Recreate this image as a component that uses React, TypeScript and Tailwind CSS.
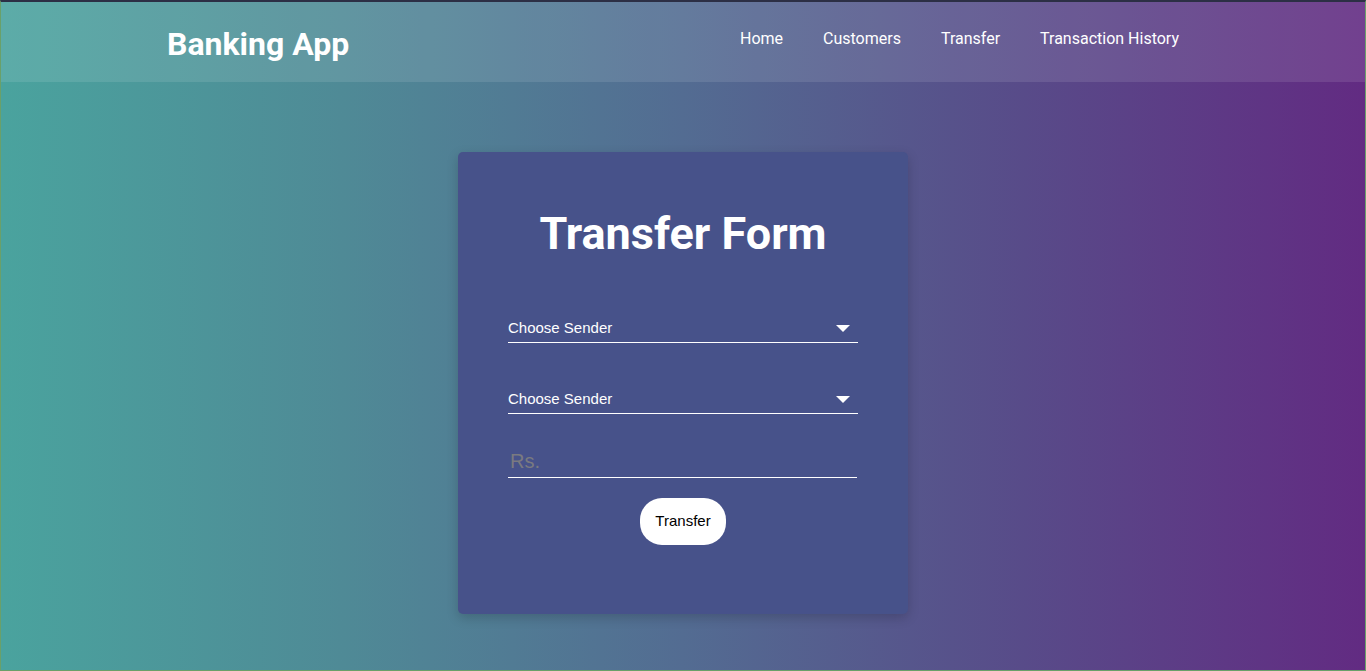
export default function App() {
  const links = ["Home", "Customers", "Transfer", "Transaction History"];

  return (
    <div className="h-[671px] w-full overflow-hidden border-t-2 border-t-[#2c2f45] border-x border-b border-x-[#6aa06a] border-b-[#6aa06a] bg-[linear-gradient(to_right,#4aa39e_0%,#4f8a96_25%,#536c92_50%,#584b89_75%,#622b82_100%)] font-['Roboto',sans-serif]">
      {/* Navbar */}
      <nav className="h-[80px] bg-white/10 flex items-center">
        <div className="pl-[166px] pt-[4px]">
          <span className="text-[32px] font-bold text-white">Banking App</span>
        </div>
        <ul className="ml-auto mr-[186px] flex gap-10 text-white text-[16px] pb-[6px]">
          {links.map((l) => (
            <li key={l}>
              <a href="#">{l}</a>
            </li>
          ))}
        </ul>
      </nav>

      {/* Form card */}
      <div className="flex justify-center pt-[70px]">
        <div className="w-[450px] h-[462px] rounded-[5px] bg-[#47528a] shadow-[0_4px_12px_rgba(0,0,0,0.18)] flex flex-col items-center">
          <h1 className="mt-[56px] text-[45px] font-bold text-white leading-[52px]">Transfer Form</h1>

          <div className="mt-[55px] w-[350px] flex flex-col font-['Liberation_Sans',Arial,sans-serif]">
            <div className="h-[28px] border-b border-white flex items-center justify-between text-white text-[15px]">
              <span>Choose Sender</span>
              <svg width="14" height="8" viewBox="0 0 14 8" className="mr-[8px]">
                <path d="M0 0 L14 0 L7 7 Z" fill="white" />
              </svg>
            </div>

            <div className="mt-[43px] h-[28px] border-b border-white flex items-center justify-between text-white text-[15px]">
              <span>Choose Sender</span>
              <svg width="14" height="8" viewBox="0 0 14 8" className="mr-[8px]">
                <path d="M0 0 L14 0 L7 7 Z" fill="white" />
              </svg>
            </div>

            <input
              type="text"
              placeholder="Rs."
              className="mt-[33px] w-[349px] h-[31px] bg-transparent border-b border-white text-[20px] text-white placeholder:text-[#7a7a80] outline-none px-[2px] pb-[2px]"
            />

            <div className="flex justify-center mt-[20px]">
              <button className="w-[86px] h-[47px] rounded-[22px] bg-white text-black text-[15px]">Transfer</button>
            </div>
          </div>
        </div>
      </div>
    </div>
  );
}
